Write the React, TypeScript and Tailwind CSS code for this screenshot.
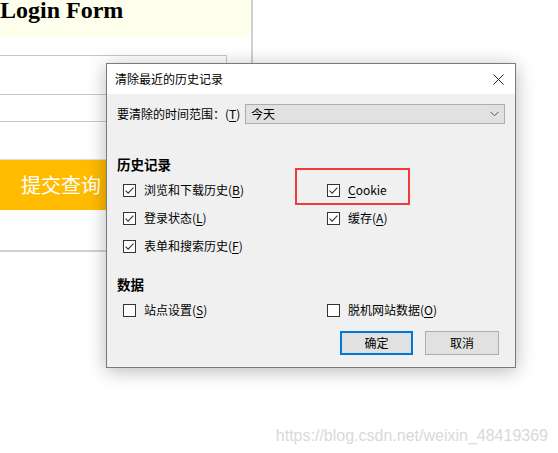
import React from "react";

const cjk = { fontFamily: '"Noto Sans CJK SC", "Noto Sans", sans-serif' };

function Box({ checked }: { checked: boolean }) {
  return (
    <svg width="13" height="13" viewBox="0 0 13 13" className="shrink-0">
      <rect x="0.5" y="0.5" width="12" height="12" fill="#ffffff" stroke="#333333" strokeWidth="1" />
      {checked && (
        <path d="M2.6 6.6 L5.1 9.1 L10.4 3.6" fill="none" stroke="#333333" strokeWidth="1.1" />
      )}
    </svg>
  );
}

function Item({ checked, label, k, after }: { checked: boolean; label: string; k: string; after?: string }) {
  return (
    <div className="flex h-[28px] items-center gap-[8px]">
      <Box checked={checked} />
      <span className="text-[12px] text-black leading-none whitespace-nowrap">
        {label}
        {k ? (
          <>
            (<span className="underline underline-offset-2">{k}</span>)
          </>
        ) : null}
        {after}
      </span>
    </div>
  );
}

export default function App() {
  return (
    <div className="relative h-[453px] w-[558px] overflow-hidden bg-white">
      {/* background page */}
      <div className="h-[252px] w-[253px] border-r-2 border-b-2 border-[#d0d0d0]">
        <div className="h-[38px] w-[251px] bg-[#ffffee]">
          <div
            className="text-[24px] font-bold leading-[20px] text-black"
            style={{ fontFamily: '"Liberation Serif", serif' }}
          >
            Login Form
          </div>
        </div>
        <div className="mt-[17px] h-[40px] w-[227px] border border-l-0 border-[#c8c8c8]" />
        <div className="h-[27px] w-[227px] border-b border-[#c8c8c8]" />
        <div className="mt-[37px] h-[1px] w-[220px] bg-[#dddddd]" />
        <div
          className="h-[50px] w-[220px] bg-[#ffbb00] pl-[21px] text-[20px] leading-[50px] text-white"
          style={cjk}
        >
          提交查询
        </div>
      </div>

      {/* dialog */}
      <div
        className="absolute left-[106px] top-[63px] h-[305px] w-[410px] border border-[#7a7a7a] bg-[#f0f0f0] shadow-[0_3px_18px_rgba(0,0,0,0.28)]"
        style={cjk}
      >
        <div className="flex h-[30px] items-center justify-between bg-white pl-[8px] pr-[11px]">
          <span className="text-[12px] leading-none text-black">清除最近的历史记录</span>
          <svg width="11" height="11" viewBox="0 0 11 11">
            <path d="M0.5 0.5 L10.5 10.5 M10.5 0.5 L0.5 10.5" stroke="#222" strokeWidth="1" />
          </svg>
        </div>
        <div className="px-[10px] pt-[10px]">
          <div className="flex h-[20px] items-center">
            <div className="w-[128px] text-[12px] leading-none text-black whitespace-nowrap">
              要清除的时间范围：(<span className="underline underline-offset-2">T</span>)
            </div>
            <div className="flex h-[20px] flex-1 items-center justify-between border border-[#adadad] bg-[#e1e1e1] pl-[5px] pr-[5px]">
              <span className="text-[12px] leading-none text-black">今天</span>
              <svg width="9" height="6" viewBox="0 0 9 6">
                <path d="M0.5 0.8 L4.5 4.8 L8.5 0.8" fill="none" stroke="#555" strokeWidth="1" />
              </svg>
            </div>
          </div>

          <div className="mt-[31px] h-[18px] text-[13.5px] font-bold leading-[18px] text-black">历史记录</div>
          <div className="mt-[3px] grid grid-cols-[204px_1fr] pl-[6px]">
            <Item checked label="浏览和下载历史" k="B" />
            <div className="flex h-[28px] items-center gap-[8px]">
              <Box checked />
              <span className="text-[12px] leading-none text-black">
                <span className="underline underline-offset-2">C</span>ookie
              </span>
            </div>
            <Item checked label="登录状态" k="L" />
            <Item checked label="缓存" k="A" />
            <Item checked label="表单和搜索历史" k="F" />
          </div>

          <div className="mt-[15px] h-[18px] text-[13.5px] font-bold leading-[18px] text-black">数据</div>
          <div className="mt-[3px] grid grid-cols-[204px_1fr] pl-[6px]">
            <Item checked={false} label="站点设置" k="S" />
            <Item checked={false} label="脱机网站数据" k="O" />
          </div>

          <div className="mt-[7px] flex justify-end gap-[12px] pr-[6px]">
            <div className="flex h-[24px] w-[73px] items-center justify-center border-2 border-[#0078d7] bg-[#e1e1e1] text-[12px] text-black">
              确定
            </div>
            <div className="flex h-[24px] w-[74px] items-center justify-center border border-[#adadad] bg-[#e1e1e1] text-[12px] text-black">
              取消
            </div>
          </div>
        </div>

        <div className="absolute left-[188px] top-[104px] h-[37px] w-[115px] border-2 border-[#ee3b3b]" />
      </div>

      {/* watermark */}
      <div
        className="absolute right-[10px] top-[427px] text-[16px] leading-[18px] text-[#d9d9d9]"
        style={{ fontFamily: '"Liberation Sans", Arial, sans-serif' }}
      >
        https://blog.csdn.net/weixin_48419369
      </div>
    </div>
  );
}
